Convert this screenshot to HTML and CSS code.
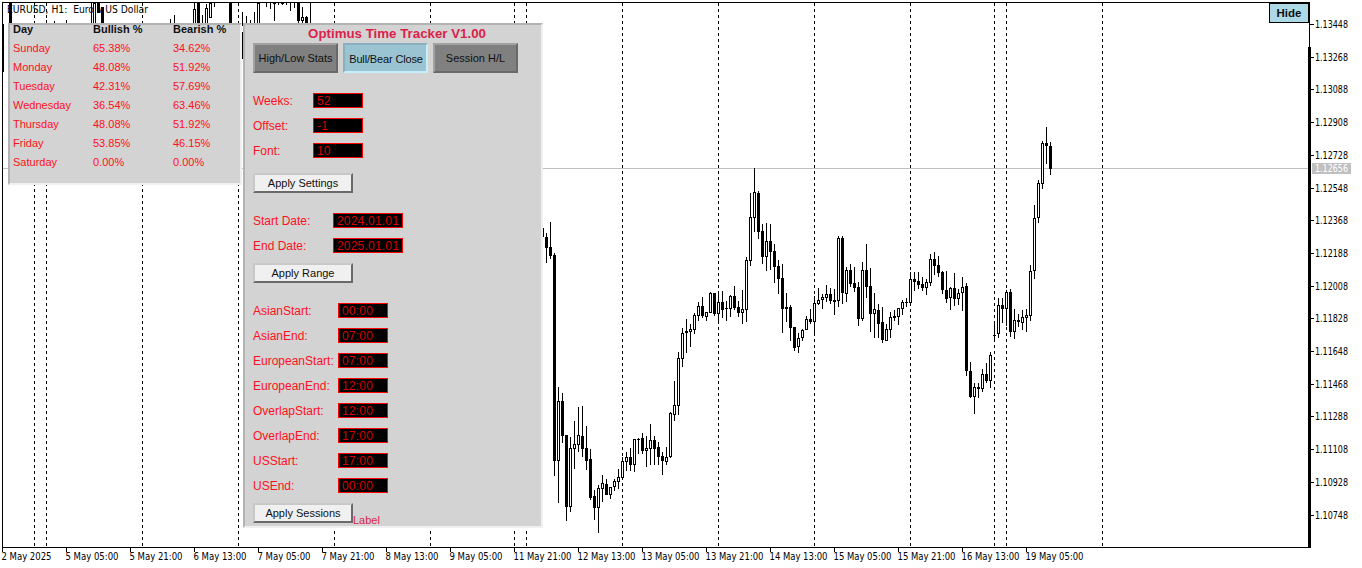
FILE: index.html
```
<!DOCTYPE html>
<html lang="en">
<head>
    <meta charset="UTF-8">
    <meta name="viewport" content="width=device-width, initial-scale=1.0">
    <title>EURUSD, H1</title>
    <link rel="stylesheet" href="styles.css">
</head>
<body>
    <div class="terminal">
        <svg class="chart" id="chart" width="1362" height="568" shape-rendering="crispEdges"></svg>

        <div class="panel stats">
            <div class="stats-row head"><span>Day</span><span>Bullish %</span><span>Bearish %</span></div>
            <div class="stats-row"><span>Sunday</span><span>65.38%</span><span>34.62%</span></div>
            <div class="stats-row"><span>Monday</span><span>48.08%</span><span>51.92%</span></div>
            <div class="stats-row"><span>Tuesday</span><span>42.31%</span><span>57.69%</span></div>
            <div class="stats-row"><span>Wednesday</span><span>36.54%</span><span>63.46%</span></div>
            <div class="stats-row"><span>Thursday</span><span>48.08%</span><span>51.92%</span></div>
            <div class="stats-row"><span>Friday</span><span>53.85%</span><span>46.15%</span></div>
            <div class="stats-row"><span>Saturday</span><span>0.00%</span><span>0.00%</span></div>
        </div>

        <div class="panel tracker">
            <h1>Optimus Time Tracker V1.00</h1>
            <div class="tabs">
                <button class="tab">High/Low Stats</button>
                <button class="tab active">Bull/Bear Close</button>
                <button class="tab">Session H/L</button>
            </div>

            <div class="group settings">
                <div class="field"><label for="weeks">Weeks:</label><input id="weeks" value="52"></div>
                <div class="field"><label for="offset">Offset:</label><input id="offset" value="-1"></div>
                <div class="field"><label for="font">Font:</label><input id="font" value="10"></div>
                <button class="apply">Apply Settings</button>
            </div>

            <div class="group range">
                <div class="field"><label for="start">Start Date:</label><input id="start" value="2024.01.01"></div>
                <div class="field"><label for="end">End Date:</label><input id="end" value="2025.01.01"></div>
                <button class="apply">Apply Range</button>
            </div>

            <div class="group sessions">
                <div class="field"><label for="asian-start">AsianStart:</label><input id="asian-start" value="00:00"></div>
                <div class="field"><label for="asian-end">AsianEnd:</label><input id="asian-end" value="07:00"></div>
                <div class="field"><label for="european-start">EuropeanStart:</label><input id="european-start" value="07:00"></div>
                <div class="field"><label for="european-end">EuropeanEnd:</label><input id="european-end" value="12:00"></div>
                <div class="field"><label for="overlap-start">OverlapStart:</label><input id="overlap-start" value="12:00"></div>
                <div class="field"><label for="overlap-end">OverlapEnd:</label><input id="overlap-end" value="17:00"></div>
                <div class="field"><label for="us-start">USStart:</label><input id="us-start" value="17:00"></div>
                <div class="field"><label for="us-end">USEnd:</label><input id="us-end" value="00:00"></div>
                <div class="last-row">
                    <button class="apply">Apply Sessions</button>
                    <span class="status">Label</span>
                </div>
            </div>
        </div>

        <button class="hide-btn">Hide</button>
    </div>

    <script src="chart.js"></script>
</body>
</html>
```
FILE: styles.css
```
:root {
    --panel: #d3d3d3;
    --panel-dark: #b3b3b3;
    --panel-light: #f0f0f0;
    --red: #ff1020;
    --crimson: #dc1f4a;
}

* {
    margin: 0;
    padding: 0;
    box-sizing: border-box;
}

body {
    background-color: #fff;
    font-family: "Liberation Sans", Arial, sans-serif;
    font-size: 11px;
    overflow: hidden;
}

.terminal {
    position: relative;
    width: 1362px;
    height: 568px;
}

.chart {
    display: block;
}

.chart text {
    font-family: "DejaVu Sans Condensed", "DejaVu Sans", sans-serif;
    font-size: 10px;
    fill: #000;
    white-space: pre;
}

.chart .current-price {
    fill: #fff;
}

/* floating windows */
.panel {
    position: absolute;
    top: 23px;
    background-color: var(--panel);
    border: 2px solid;
    border-color: var(--panel-dark) var(--panel-light) var(--panel-light) var(--panel-dark);
}

.stats {
    left: 8px;
    width: 234px;
    height: 162px;
    padding-left: 3px;
    color: var(--red);
}

.stats-row {
    display: grid;
    grid-template-columns: 80px 80px 1fr;
    height: 19px;
    line-height: 19px;
    white-space: nowrap;
}

.stats-row.head {
    height: 14px;
    line-height: 8px;
    color: #111;
    font-weight: bold;
}

.tracker {
    left: 243px;
    width: 300px;
    height: 505px;
    padding-left: 8px;
}

.tracker h1 {
    height: 18px;
    line-height: 17px;
    font-size: 13.3px;
    color: var(--crimson);
    text-align: center;
}

.tabs {
    display: flex;
    gap: 5px;
}

button {
    font-family: inherit;
    font-size: 11px;
    color: #111;
    white-space: nowrap;
}

.tab {
    width: 85px;
    height: 30px;
    background-color: #808080;
    border: 2px solid;
    border-color: #a2a2a2 #696969 #696969 #a2a2a2;
}

.tab.active {
    padding: 2px 0 0 1px;
    background-color: #9ac4d2;
    border-color: #8bb0bd #c4f0fc #c4f0fc #8bb0bd;
    letter-spacing: -0.15px;
}

.group {
    display: flex;
    flex-direction: column;
    align-items: flex-start;
    gap: 10px;
    margin-top: 20px;
}

.field {
    display: flex;
    height: 15px;
    line-height: 16px;
    font-size: 12px;
    color: var(--red);
}

.field label {
    width: 60px;
    white-space: nowrap;
}

.field input {
    width: 50px;
    height: 15px;
    padding-left: 3px;
    background-color: #000;
    border: 1px solid #f00;
    color: #d80000;
    font-family: inherit;
    font-size: 12px;
    letter-spacing: 0.2px;
}

.apply {
    width: 100px;
    height: 20px;
    background-color: #f0f0f0;
    border: 2px solid;
    border-color: #c8c8c8 #696969 #696969 #c8c8c8;
}

.settings .apply {
    margin-top: 5px;
}

.range .field label {
    width: 80px;
}

.range .field input {
    width: 70px;
}

.sessions .field label {
    width: 85px;
}

.last-row {
    display: flex;
    align-items: flex-end;
    height: 20px;
}

.status {
    line-height: 13px;
    margin-bottom: -4px;
    color: var(--crimson);
}

.hide-btn {
    position: absolute;
    top: 3px;
    left: 1269px;
    width: 40px;
    height: 20px;
    background-color: #add8e6;
    border: 1px solid #000;
    font-size: 11.5px;
    font-weight: bold;
}
```
FILE: chart.js
```
const svg = document.getElementById('chart');
const NS = 'http://www.w3.org/2000/svg';

// [high, bodyTop, bodyBottom, low, bearish], one per 4px starting at x = 546
const candles = [
    [233,237,247,262,1],[222,247,255,258,1],[253,255,460,475,1],[387,401,460,502,0],[393,401,435,442,1],
    [435,435,506,520,1],[437,448,506,511,0],[421,444,448,468,0],[407,435,444,451,0],[406,436,448,456,1],
    [426,448,460,469,1],[449,459,497,499,1],[490,496,507,519,1],[485,488,507,532,0],[475,483,488,501,0],
    [479,484,494,494,1],[487,487,494,498,0],[479,481,486,490,0],[469,477,481,488,0],[457,461,477,478,0],
    [452,457,461,470,0],[448,457,464,470,1],[439,439,464,471,0],[438,439,439,453,1],[433,438,450,453,1],
    [436,448,450,466,0],[424,440,448,464,0],[436,440,448,464,1],[442,447,456,464,1],[452,456,460,474,1],
    [447,457,461,464,0],[412,413,456,457,0],[381,405,414,420,0],[352,358,405,414,0],[328,333,358,366,0],
    [319,331,332,352,1],[324,329,331,346,0],[313,315,329,333,0],[302,306,315,320,0],[297,306,315,317,1],
    [312,312,316,320,0],[292,293,312,312,0],[293,293,313,315,1],[294,302,313,321,0],[291,302,309,317,1],
    [301,308,308,320,1],[295,296,308,316,0],[286,296,307,309,1],[301,307,312,316,1],[290,309,312,323,0],
    [257,260,309,321,0],[193,217,260,265,0],[168,192,217,231,0],[191,193,231,238,1],[224,231,256,263,1],
    [223,241,256,270,0],[224,241,251,269,1],[244,251,266,282,1],[260,266,278,293,1],[264,278,308,332,1],
    [293,307,308,321,1],[305,307,327,340,1],[327,327,347,350,1],[333,338,346,352,0],[329,330,337,340,0],
    [316,319,329,329,0],[309,319,321,323,1],[296,303,321,334,0],[288,300,303,304,0],[294,297,299,308,0],
    [285,294,297,301,0],[288,294,300,303,1],[289,300,301,314,1],[236,238,300,306,0],[236,238,292,303,1],
    [267,270,293,301,0],[264,270,283,286,1],[267,283,287,291,1],[282,287,318,325,1],[262,270,318,320,0],
    [244,270,286,297,1],[268,286,313,331,1],[293,309,313,337,0],[304,310,323,337,1],[307,322,339,342,1],
    [324,329,340,340,0],[312,317,329,337,0],[310,316,317,320,1],[308,308,316,324,0],[300,302,308,314,0],
    [298,302,302,306,1],[272,279,302,303,0],[272,279,281,290,1],[272,281,284,288,1],[277,284,287,290,1],
    [279,282,287,294,0],[254,259,282,285,0],[252,259,265,274,1],[256,265,272,276,1],[271,272,289,293,1],
    [271,290,298,302,1],[287,288,297,309,0],[273,288,298,305,1],[289,293,298,304,0],[277,287,292,310,0],
    [283,286,370,375,1],[362,371,396,397,1],[383,387,396,413,0],[383,387,388,397,1],[369,374,388,391,0],
    [363,374,380,382,1],[352,355,380,387,0],[324,335,335,340,1],[298,305,333,337,0],[298,305,308,322,1],
    [290,292,308,325,0],[289,292,331,336,1],[309,320,331,338,0],[314,320,321,326,1],[310,317,322,329,0],
    [309,315,317,331,0],[265,271,315,320,0],[205,218,270,278,0],[180,183,217,222,0],[141,143,183,188,0],
    [127,143,145,163,1],[142,146,168,174,1]
];

// bars that reach above the panels: [x, high, bodyTop, bodyBottom, low, bearish]
const upperCandles = [
    [10,3,3,23,23,1],[94,3,3,23,23,0],[98,3,3,12,12,1],[102,7,7,23,23,1],
    [194,3,9,23,23,0],[198,3,3,23,23,1],[206,4,8,23,23,0],[210,3,3,17,17,0],[230,3,3,23,23,1],
    [258,3,3,23,23,0],[274,3,3,3,20,1],[282,3,3,3,4,1],[298,3,3,20,22,1],[302,7,17,20,22,0],[306,16,17,23,23,1]
];

// plain wicks: [x, top, bottom]
const wicks = [
    [3,24,71],[46,20,23],[54,21,23],[66,20,23],[91,3,23],[170,19,23],[174,15,23],[202,15,23],[214,3,6],
    [242,12,25],[242,32,58],[246,16,23],[250,20,23],[254,12,23],[266,3,6],[270,3,8],[278,3,4],
    [286,3,4],[290,3,10],[294,3,7],[310,3,23],[543,228,236]
];

function add(name, attrs, text) {
    const el = document.createElementNS(NS, name);
    for (const key in attrs) el.setAttribute(key, attrs[key]);
    if (text) el.textContent = text;
    svg.appendChild(el);
}

function rect(x, y, width, height, fill) {
    add('rect', { x, y, width, height, fill });
}

function label(text, x, y, width, cls) {
    add('text', { x, y, textLength: width, lengthAdjust: 'spacingAndGlyphs', class: cls || 'label' }, text);
}

function drawCandle(x, high, top, bottom, low, bearish) {
    rect(x, high, 1, low - high + 1, '#000');
    rect(x - 1, top, 3, bottom - top + 1, '#000');
    if (!bearish && bottom - top > 1) rect(x, top + 1, 1, bottom - top - 1, '#fff');
}

// day separators
[34, 46, 142, 238, 334, 430, 514, 526, 622, 718, 814, 910, 994, 1006, 1102].forEach(x => {
    for (let y = 3; y < 547; y += 6) rect(x, y, 1, 3, '#000');
});

// current price line
rect(3, 168, 1306, 1, '#c0c0c0');

upperCandles.forEach(c => drawCandle(...c));
wicks.forEach(w => rect(w[0], w[1], 1, w[2] - w[1] + 1, '#000'));
candles.forEach((c, i) => drawCandle(546 + i * 4, ...c));

// frame
rect(2, 2, 1308, 1, '#000');
rect(2, 2, 1, 546, '#000');
rect(2, 547, 1308, 1, '#000');
rect(1309, 2, 1, 546, '#000');
rect(1308, 47, 3, 501, '#000');

// price scale
for (let i = 0; i < 16; i++) {
    const y = Math.round(24 + i * 32.7);
    rect(1310, y, 4, 1, '#000');
    label((1.13448 - i * 0.0018).toFixed(5), 1315, y + 4, 33);
}
rect(1312, 163, 39, 11, '#c0c0c0');
label('1.12656', 1315, 172, 33, 'current-price');

// time scale
const times = [
    '2 May 2025', '5 May 05:00', '5 May 21:00', '6 May 13:00', '7 May 05:00', '7 May 21:00',
    '8 May 13:00', '9 May 05:00', '11 May 21:00', '12 May 13:00', '13 May 05:00', '13 May 21:00',
    '14 May 13:00', '15 May 05:00', '15 May 21:00', '16 May 13:00', '19 May 05:00'
];
const widths = { 10: 50, 11: 53, 12: 58 };
times.forEach((t, i) => {
    rect(2 + i * 64, 548, 1, 4, '#000');
    label(t, 1.5 + i * 64, 560, widths[t.length]);
});

label('EURUSD, H1:  Euro v US Dollar', 7, 13, 141);
```
